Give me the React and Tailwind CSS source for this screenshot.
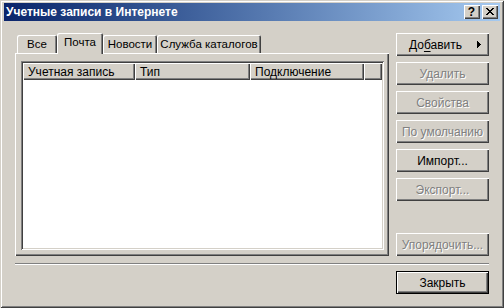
const raised =
  'shadow-[inset_1px_1px_0_#ffffff,inset_-1px_-1px_0_#404040,inset_-2px_-2px_0_#808080]';

function Btn({ children, disabled, isDefault, className = '' }) {
  const text = disabled ? 'text-[#808080] [text-shadow:1px_1px_0_#ffffff]' : 'text-black';
  if (isDefault) {
    return (
      <div className={`w-[93px] h-[23px] border border-black ${className}`}>
        <div className={`h-full w-full flex items-center justify-center ${raised} ${text}`}>{children}</div>
      </div>
    );
  }
  return (
    <div className={`w-[93px] h-[23px] shrink-0 flex items-center justify-center ${raised} ${text} ${className}`}>
      {children}
    </div>
  );
}

function Tab({ label, width, selected }) {
  if (selected) {
    return (
      <div
        className="relative z-10 h-[21px] -mb-px bg-[#d4d0c8] flex items-start justify-center pt-[4px] text-[11.5px] rounded-t-[2px] shadow-[inset_1px_1px_0_#ffffff,inset_-1px_0_0_#404040,inset_-2px_0_0_#808080]"
        style={{ width }}
      >
        {label}
      </div>
    );
  }
  return (
    <div
      className="h-[18px] flex items-center justify-center pt-px text-[11.5px] whitespace-nowrap rounded-t-[2px] shadow-[inset_1px_1px_0_#ffffff,inset_-1px_0_0_#404040,inset_-2px_0_0_#808080]"
      style={{ width }}
    >
      {label}
    </div>
  );
}

function HeaderCell({ label, width, grow }) {
  return (
    <div
      className={`h-[17px] flex items-center pl-[5px] bg-[#d4d0c8] ${raised} ${grow ? 'flex-1' : 'shrink-0'}`}
      style={grow ? undefined : { width }}
    >
      {label}
    </div>
  );
}

export default function App() {
  return (
    <div
      className="w-[504px] h-[308px] bg-[#d4d0c8] p-[4px] pt-[3px] flex flex-col text-[12px] leading-none text-black shadow-[inset_1px_1px_0_#d4d0c8,inset_-1px_-1px_0_#404040,inset_2px_2px_0_#ffffff,inset_-2px_-2px_0_#808080]"
      style={{ fontFamily: '"Liberation Sans", Arial, sans-serif' }}
    >
      {/* Title bar */}
      <div className="h-[18px] flex items-center pl-[2px] pr-[2px] bg-linear-to-r from-[#0a246a] to-[#a6caf0]">
        <span className="flex-1 text-white font-bold text-[12px]">Учетные записи в Интернете</span>
        <div className="flex gap-[2px]">
          <div className={`w-[16px] h-[14px] bg-[#d4d0c8] flex items-center justify-center font-bold text-[12px] ${raised}`}>
            <span className="-ml-px">?</span>
          </div>
          <div className={`w-[16px] h-[14px] bg-[#d4d0c8] flex items-center justify-center ${raised}`}>
            <svg width="8" height="7" viewBox="0 0 8 7" className="-mt-px -ml-px" shapeRendering="crispEdges">
              <path d="M0 0h2v1h-2zM6 0h2v1h-2zM1 1h2v1h-2zM5 1h2v1h-2zM2 2h4v1h-4zM3 3h2v1h-2zM2 4h4v1h-4zM1 5h2v1h-2zM5 5h2v1h-2zM0 6h2v1h-2zM6 6h2v1h-2z" fill="#000" />
            </svg>
          </div>
        </div>
      </div>

      {/* Body */}
      <div className="flex-1 pl-[11px] pt-[12px] flex flex-col">
        <div className="flex gap-[7px]">
          {/* Tabs + page */}
          <div className="w-[374px] flex flex-col">
            <div className="h-[20px] flex items-end pl-[2px]">
              <Tab label="Все" width={40} />
              <Tab label="Почта" width={46} selected />
              <Tab label="Новости" width={54} />
              <Tab label="Служба каталогов" width={104} />
            </div>
            <div className="h-[203px] pl-[6px] pt-[8px] pr-[5px] pb-[6px] shadow-[inset_1px_1px_0_#ffffff,inset_-1px_-1px_0_#404040,inset_-2px_-2px_0_#808080]">
              <div className="h-full p-[2px] bg-white shadow-[inset_1px_1px_0_#808080,inset_-1px_-1px_0_#ffffff,inset_2px_2px_0_#404040,inset_-2px_-2px_0_#d4d0c8]">
                <div className="flex">
                  <HeaderCell label="Учетная запись" width={112} />
                  <HeaderCell label="Тип" width={115} />
                  <HeaderCell label="Подключение" width={114} />
                  <HeaderCell label="" grow />
                </div>
              </div>
            </div>
          </div>

          {/* Buttons */}
          <div className="w-[93px] flex flex-col gap-[6px]">
            <Btn className="justify-start! pl-[13px] pr-[8px]">
              <span className="flex-1">
                До<span className="underline underline-offset-2">б</span>авить
              </span>
              <svg width="4" height="7" viewBox="0 0 4 7" shapeRendering="crispEdges">
                <path d="M0 0h1v7h-1zM1 1h1v5h-1zM2 2h1v3h-1zM3 3h1v1h-1z" fill="#000" />
              </svg>
            </Btn>
            <Btn disabled>Удалить</Btn>
            <Btn disabled>Свойства</Btn>
            <Btn disabled>По умолчанию</Btn>
            <Btn>Импорт...</Btn>
            <Btn disabled>Экспорт...</Btn>
            <Btn disabled className="mt-auto">Упорядочить...</Btn>
          </div>
        </div>

        <div className="mt-[7px] w-[474px] h-[2px] border-t border-[#808080] border-b border-b-white" />

        <div className="mt-[6px] ml-[381px]">
          <Btn isDefault>Закрыть</Btn>
        </div>
      </div>
    </div>
  );
}
